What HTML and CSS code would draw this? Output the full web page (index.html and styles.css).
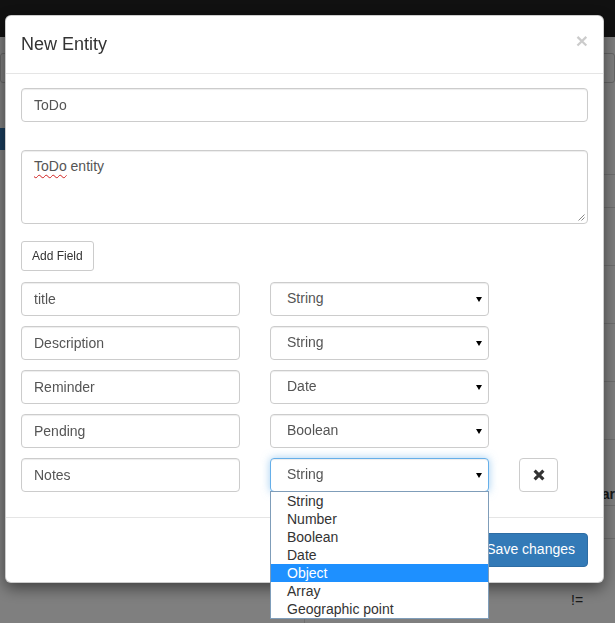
FILE: index.html
```html
<!DOCTYPE html>
<html lang="en">
<head>
<meta charset="utf-8">
<title>New Entity</title>
<link rel="stylesheet" href="styles.css">
</head>
<body>
<div class="page">
  <nav class="navbar"></nav>
  <div class="page-body">
    <aside class="sidebar">
      <div class="side-search">Entities</div>
      <div class="side-item active">ToDo</div>
    </aside>
    <section class="content">
      <div class="content-search"></div>
      <div class="trow tall"></div>
      <div class="trow short"></div>
      <div class="trow mid"></div>
      <div class="trow mid"></div>
      <div class="trow mid"></div>
      <div class="trow mid"></div>
      <div class="trow name-row"><span class="bold-cell">ar</span></div>
      <div class="trow short"></div>
      <div class="trow last"><span class="op">!=</span></div>
    </section>
  </div>
</div>

<div class="backdrop"></div>

<div class="modal">
  <div class="modal-header">
    <h4 class="modal-title">New Entity</h4>
    <span class="close">&times;</span>
  </div>
  <div class="modal-body">
    <input class="form-control name-input" type="text" value="ToDo">
    <div class="form-control textarea"><span class="misspelled">ToDo</span> entity
      <svg class="grip" width="7" height="7" viewBox="0 0 7 7"><path d="M6.5 0.5 L0.5 6.5 M6.5 3.5 L3.5 6.5" stroke="#888" stroke-width="1" fill="none"/></svg>
    </div>
    <button class="btn btn-sm add-field">Add Field</button>

    <div class="field-row">
      <input class="form-control" type="text" value="title">
      <div class="form-control select">String</div>
    </div>
    <div class="field-row">
      <input class="form-control" type="text" value="Description">
      <div class="form-control select">String</div>
    </div>
    <div class="field-row">
      <input class="form-control" type="text" value="Reminder">
      <div class="form-control select">Date</div>
    </div>
    <div class="field-row">
      <input class="form-control" type="text" value="Pending">
      <div class="form-control select">Boolean</div>
    </div>
    <div class="field-row">
      <input class="form-control" type="text" value="Notes">
      <div class="form-control select focused">String
        <ul class="dropdown">
          <li>String</li>
          <li>Number</li>
          <li>Boolean</li>
          <li>Date</li>
          <li class="selected">Object</li>
          <li>Array</li>
          <li>Geographic point</li>
        </ul>
      </div>
      <button class="btn btn-remove" aria-label="Remove">
        <svg width="12" height="12" viewBox="0 0 12 12"><path d="M1.6 1.6 L10.4 10.4 M10.4 1.6 L1.6 10.4" stroke="#333" stroke-width="3.1" fill="none"/></svg>
      </button>
    </div>
  </div>
  <div class="modal-footer">
    <button class="btn btn-default">Close</button>
    <button class="btn btn-primary">Save changes</button>
  </div>
</div>
</body>
</html>
```
FILE: styles.css
```css
* { box-sizing: border-box; }

html, body {
  margin: 0;
  height: 623px;
  overflow: hidden;
}

body {
  font-family: "Liberation Sans", Arial, Helvetica, sans-serif;
  font-size: 14px;
  line-height: 1.42857;
  color: #333;
  background: #fff;
}

/* ---------- background page ---------- */
.navbar {
  height: 37px;
  background: #222;
}

.page-body {
  display: grid;
  grid-template-columns: 300px 1fr;
}

.sidebar {
  padding-top: 16px;
}

.side-search {
  height: 30px;
  border: 1px solid #ccc;
  border-radius: 3px;
  padding: 5px 10px;
  text-align: right;
  color: #555;
}

.side-item {
  margin-top: 45px;
  height: 22px;
  padding: 1px 10px;
}

.side-item.active {
  background: #337ab7;
  color: #fff;
}

.content {
  padding-top: 16px;
  padding-left: 4px;
}

.content-search {
  height: 30px;
  margin-left: 3px;
  border: 1px solid #ccc;
  border-radius: 3px;
}

.trow {
  border-bottom: 1px solid #ddd;
  position: relative;
}

.trow.tall { height: 92px; }
.trow.short { height: 33px; }
.trow.mid { height: 58px; }
.trow.name-row { height: 66px; }
.trow.last { height: 90px; border-bottom: 0; border-left: 1px solid #ddd; }

.bold-cell {
  display: block;
  padding-top: 45px;
  text-align: right;
  font-weight: bold;
}

.op {
  display: block;
  padding-top: 52px;
  padding-left: 266px;
  color: #333;
}

.backdrop {
  position: fixed;
  inset: 0;
  background: rgba(0, 0, 0, 0.5);
}

/* ---------- modal ---------- */
.modal {
  position: fixed;
  left: 5px;
  top: 15px;
  width: 599px;
  background: #fff;
  border: 1px solid rgba(0, 0, 0, 0.2);
  border-radius: 6px;
  box-shadow: 0 5px 15px rgba(0, 0, 0, 0.5);
}

.modal-header {
  display: flex;
  justify-content: space-between;
  align-items: flex-start;
  padding: 15px;
  border-bottom: 1px solid #e5e5e5;
}

.modal-title {
  margin: 0;
  font-size: 18px;
  font-weight: 500;
  line-height: 1.42857;
  color: #333;
  padding-top: 1px;
}

.close {
  margin-top: -1px;
  font-size: 21px;
  font-weight: bold;
  line-height: 1;
  color: #000;
  opacity: 0.2;
}

.modal-body {
  padding: 14px 15px 15px;
}

.form-control {
  display: block;
  width: 100%;
  height: 34px;
  padding: 6px 12px;
  font-family: inherit;
  font-size: 14px;
  line-height: 1.42857;
  color: #555;
  background: #fff;
  border: 1px solid #ccc;
  border-radius: 4px;
  box-shadow: inset 0 1px 1px rgba(0, 0, 0, 0.075);
  margin: 0;
}

.name-input {
  margin-bottom: 28px;
}

.textarea {
  position: relative;
  height: 74px;
  margin-bottom: 17px;
}

.misspelled {
  text-decoration: underline wavy #d02020;
  text-decoration-thickness: 1px;
  text-underline-offset: 3px;
  text-decoration-skip-ink: none;
}

.grip {
  position: absolute;
  right: 2px;
  bottom: 2px;
}

.btn {
  display: inline-block;
  margin: 0;
  padding: 6px 12px;
  font-family: inherit;
  font-size: 14px;
  line-height: 1.42857;
  text-align: center;
  white-space: nowrap;
  color: #333;
  background: #fff;
  border: 1px solid #ccc;
  border-radius: 4px;
  cursor: pointer;
}

.btn-sm {
  padding: 5px 10px;
  font-size: 12px;
  line-height: 1.5;
  border-radius: 3px;
}

.add-field {
  display: block;
  height: 30px;
  margin-bottom: 11px;
}

.field-row {
  display: grid;
  grid-template-columns: 219px 219px 39px;
  column-gap: 30px;
  margin-bottom: 10px;
}

.select {
  position: relative;
  padding-left: 16px;
  color: #555;
}

.select::after {
  content: "";
  position: absolute;
  right: 6px;
  top: 14px;
  border-left: 3px solid transparent;
  border-right: 3px solid transparent;
  border-top: 5px solid #000;
}

.select.focused {
  border-color: #66afe9;
  box-shadow: inset 0 1px 1px rgba(0, 0, 0, 0.075), 0 0 8px rgba(102, 175, 233, 0.6);
}

.dropdown {
  position: absolute;
  left: -1px;
  top: 32px;
  width: 219px;
  margin: 0;
  padding: 0;
  list-style: none;
  background: #fff;
  border: 1px solid #7f9db9;
  z-index: 5;
}

.dropdown li {
  height: 18px;
  line-height: 18px;
  padding-left: 16px;
  font-size: 14px;
  color: #333;
}

.dropdown li.selected {
  background: #1e90ff;
  color: #fff;
}

.btn-remove {
  display: flex;
  align-items: center;
  justify-content: center;
  width: 39px;
  height: 34px;
  padding: 0;
}

.modal-footer {
  display: flex;
  justify-content: flex-end;
  gap: 5px;
  padding: 15px;
  border-top: 1px solid #e5e5e5;
}

.btn-primary {
  color: #fff;
  background: #337ab7;
  border-color: #2e6da4;
}
```
